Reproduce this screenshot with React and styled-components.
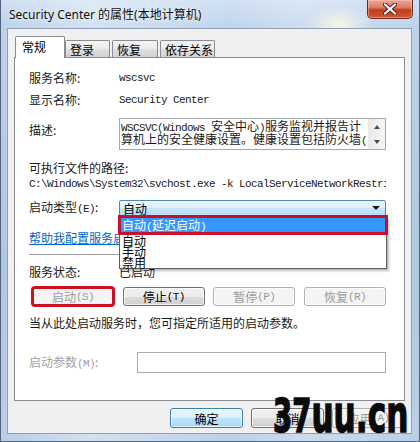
import React from 'react';
import styled, { createGlobalStyle } from 'styled-components';

const CJK = `"Noto Sans CJK SC", "Noto Sans", sans-serif`;
const MONO = `"Liberation Mono", "DejaVu Sans Mono", monospace`;

const Global = createGlobalStyle`
  html, body { margin: 0; padding: 0; }
  body {
    width: 420px; height: 442px; overflow: hidden;
    background: #b8cde6;
    font-family: ${CJK};
  }
`;

const Window = styled.div`
  position: relative;
  box-sizing: border-box;
  width: 420px;
  height: 442px;
  display: flex;
  flex-direction: column;
  padding: 0 8px 8px 7px;
  border-left: 1px solid #51647b;
  border-right: 1px solid #51647b;
  border-bottom: 1px solid #51647b;
  overflow: hidden;
  background:
    radial-gradient(ellipse 34px 18px at 338px 24px, rgba(255, 251, 225, 0.85), rgba(255, 251, 225, 0)),
    linear-gradient(90deg, rgba(255,255,255,0) 0, rgba(255,255,255,0.35) 90px, rgba(255,255,255,0.05) 230px, rgba(255,255,255,0.25) 300px, rgba(255,255,255,0) 420px),
    linear-gradient(#cfe0f2, #bcd2ea 28px, #aec7e3 60%, #b9cfe8);
`;

const TitleBar = styled.div`
  flex: none;
  height: 29px;
  display: flex;
  justify-content: space-between;
  align-items: flex-start;
`;

const Title = styled.div`
  margin-top: 7px;
  padding-left: 1px;
  font-family: "Noto Sans", "Noto Sans CJK SC", sans-serif;
  font-size: 12px;
  line-height: 16px;
  color: #111;
  text-shadow: 0 0 5px rgba(255, 255, 255, 0.95);
`;

const CloseButton = styled.div`
  box-sizing: border-box;
  width: 46px;
  height: 19px;
  margin-right: -2px;
  border: 1px solid #6a2a20;
  border-top: none;
  border-radius: 0 0 5px 5px;
  background: linear-gradient(#eaa898 0%, #dc7b64 42%, #c43d1d 55%, #d15634 100%);
  box-shadow: inset 0 0 0 1px rgba(255, 205, 195, 0.45);
  display: flex;
  align-items: center;
  justify-content: center;
`;

const Client = styled.div`
  flex: 1;
  min-height: 0;
  display: flex;
  flex-direction: column;
  background: #f0f0f0;
  padding: 7px 6px 0 6px;
  box-shadow: 0 0 0 1px #8ea1b8;
`;

const TabStrip = styled.div`
  flex: none;
  height: 21px;
  display: flex;
  align-items: flex-end;
  padding-left: 1px;
  position: relative;
  z-index: 2;
`;

const Tab = styled.div`
  box-sizing: border-box;
  width: ${p => p.$w}px;
  margin-left: ${p => p.$gap}px;
  height: ${p => (p.$active ? 22 : 17)}px;
  margin-bottom: ${p => (p.$active ? -1 : 0)}px;
  padding-left: ${p => (p.$active ? 6 : 4)}px;
  border: 1px solid #898c95;
  border-bottom: none;
  border-radius: 2px 2px 0 0;
  background: ${p =>
    p.$active ? '#ffffff' : 'linear-gradient(#f4f4f4, #ececec 45%, #dedede 55%, #d2d2d2)'};
  font-family: ${CJK};
  font-size: 12px;
  line-height: ${p => (p.$active ? 20 : 18)}px;
  color: #000;
  white-space: nowrap;
`;

const Panel = styled.div`
  flex: 1;
  min-height: 0;
  display: flex;
  flex-direction: column;
  position: relative;
  background: #fff;
  border: 1px solid #898c95;
  padding: 0 18px 0 14px;
`;

const Row = styled.div`
  display: grid;
  grid-template-columns: ${p => p.$cols || '90px 1fr'};
  align-items: ${p => p.$align || 'center'};
  margin-top: ${p => p.$mt || 0}px;
  height: ${p => p.$h}px;
`;

const Label = styled.div`
  font-family: ${CJK};
  font-size: 12px;
  line-height: 16px;
  padding-top: ${p => p.$pt || 0}px;
  color: ${p => (p.$disabled ? '#a2a2a2' : '#1a1a1a')};
  white-space: nowrap;
`;

const Asc = styled.span`
  font-family: ${MONO};
  font-size: 11px;
  letter-spacing: -0.6px;
`;

const Mono = styled.div`
  font-family: ${MONO};
  font-size: 11px;
  letter-spacing: -0.6px;
  line-height: 16px;
  color: #1a1a1a;
  white-space: nowrap;
  overflow: hidden;
`;

const Value = styled.div`
  font-family: ${CJK};
  font-size: 12px;
  line-height: 16px;
  color: #1a1a1a;
`;

const Line = styled.div`
  margin-top: ${p => p.$mt || 0}px;
  height: 16px;
  font-family: ${CJK};
  font-size: 12px;
  line-height: 16px;
  color: #1a1a1a;
  white-space: nowrap;
`;

const PathLine = styled(Mono)`
  height: 16px;
`;

const TextBox = styled.div`
  box-sizing: border-box;
  height: 32px;
  border: 1px solid #a5a8ae;
  display: flex;
  background: #fff;
`;

const TextLines = styled.div`
  flex: 1;
  min-width: 0;
  padding-left: 1px;
  overflow: hidden;
`;

const TextLine = styled.div`
  font-family: ${CJK};
  font-size: 12px;
  line-height: 14px;
  height: 14px;
  margin-bottom: -1px;
  color: #1a1a1a;
  white-space: nowrap;
  overflow: hidden;
`;

const ScrollBar = styled.div`
  width: 17px;
  display: flex;
  flex-direction: column;
  background: linear-gradient(90deg, #e9e9e9, #f6f6f6);
`;

const ScrollButton = styled.div`
  flex: 1;
  display: flex;
  align-items: center;
  justify-content: center;
`;

const Arrow = styled.div`
  width: 0;
  height: 0;
  border-left: 3.5px solid transparent;
  border-right: 3.5px solid transparent;
  ${p => (p.$dir === 'up' ? 'border-bottom: 4px solid #4d4d4d;' : 'border-top: 4px solid #4d4d4d;')}
`;

const SelectWrap = styled.div`
  position: relative;
  height: 17px;
`;

const Select = styled.div`
  box-sizing: border-box;
  height: 17px;
  border: 1px solid #4f88ba;
  border-radius: 2px;
  background: linear-gradient(#eef7fd, #dceefb 50%, #c7e4f8 50%, #b6daf3);
  display: flex;
  align-items: center;
  justify-content: space-between;
  padding: 0 5px 0 3px;
  font-family: ${CJK};
  font-size: 12px;
  line-height: 15px;
  color: #000;
`;

const SelectArrow = styled.div`
  width: 0;
  height: 0;
  border-left: 4px solid transparent;
  border-right: 4px solid transparent;
  border-top: 4px solid #1a1a1a;
`;

const Dropdown = styled.div`
  position: absolute;
  top: 100%;
  left: 0;
  right: -1px;
  z-index: 10;
  background: #fff;
  border: 1px solid #5f5f5f;
  box-shadow: 2px 2px 2px rgba(0, 0, 0, 0.28);
`;

const Option = styled.div`
  box-sizing: border-box;
  font-family: ${CJK};
  font-size: 12px;
  color: ${p => (p.$selected ? '#fff' : '#000')};
  white-space: nowrap;
  ${p =>
    p.$selected
      ? `
    height: 20px;
    margin: -3px -2px 0 -2px;
    border: 3px solid #c8102a;
    background: #3399ff;
    padding-left: 1px;
    line-height: 14px;
  `
      : `
    height: 11px;
    line-height: 11px;
    padding-left: 2px;
  `}
`;

const Link = styled.div`
  margin-top: ${p => p.$mt}px;
  height: 16px;
  font-family: ${CJK};
  font-size: 12px;
  line-height: 16px;
  color: #0066cc;
  text-decoration: underline;
  white-space: nowrap;
`;

const Separator = styled.div`
  margin-top: 8px;
  height: 1px;
  background: #a0a0a0;
`;

const ButtonRow = styled.div`
  margin-top: 7px;
  padding-left: 3px;
  display: flex;
  justify-content: space-between;
`;

const Button = styled.div`
  box-sizing: border-box;
  width: ${p => p.$w || 82}px;
  height: ${p => p.$h || 19}px;
  border: 1px solid ${p => (p.$disabled ? '#adb2b5' : p.$default ? '#3c7fb1' : '#707070')};
  border-radius: 3px;
  background: ${p =>
    p.$disabled
      ? '#f4f4f4'
      : p.$default
      ? 'linear-gradient(#eaf6fd, #d9f0fc 50%, #bee6fd 50%, #a7d9f5)'
      : 'linear-gradient(#f2f2f2, #ebebeb 50%, #dddddd 50%, #cfcfcf)'};
  box-shadow: inset 0 0 0 1px rgba(255, 255, 255, 0.7);
  color: ${p => (p.$disabled ? '#9a9a9a' : '#000')};
  font-family: ${CJK};
  font-size: 12px;
  display: flex;
  align-items: center;
  justify-content: center;
  white-space: nowrap;
  outline: ${p => (p.$marked ? '3px solid #cc1020' : 'none')};
  outline-offset: -2px;
`;

const Input = styled.div`
  box-sizing: border-box;
  height: 21px;
  border: 1px solid #abadb3;
  background: #fff;
`;

const Footer = styled.div`
  flex: none;
  height: 32px;
  box-sizing: border-box;
  padding-top: 7px;
  display: flex;
  justify-content: flex-end;
  gap: 8px;
`;

const Watermark = styled.div`
  position: absolute;
  left: 272px;
  top: 391px;
  display: flex;
  align-items: baseline;
  transform: scaleX(0.6);
  transform-origin: left top;
  font-family: "DejaVu Sans", sans-serif;
  font-weight: 900;
  color: #0a0a0a;
  -webkit-text-stroke: 1.5px #0a0a0a;
  white-space: nowrap;
  pointer-events: none;
`;

const WaterPart = styled.span`
  font-size: ${p => p.$size}px;
  line-height: 46px;
`;

const tabs = [
  { label: '常规', w: 50, gap: 0, active: true },
  { label: '登录', w: 45, gap: 0 },
  { label: '恢复', w: 46, gap: 2 },
  { label: '依存关系', w: 55, gap: 2 },
];

export default function App() {
  return (
    <>
      <Global />
      <Window>
        <TitleBar>
          <Title>Security Center 的属性(本地计算机)</Title>
          <CloseButton>
            <svg width="14" height="12" viewBox="0 0 14 12">
              <path d="M2 1.5 L12 10.5 M12 1.5 L2 10.5" stroke="#5a1c14" strokeWidth="4.2" strokeLinecap="round" />
              <path d="M2 1.5 L12 10.5 M12 1.5 L2 10.5" stroke="#ffffff" strokeWidth="2.3" strokeLinecap="round" />
            </svg>
          </CloseButton>
        </TitleBar>
        <Client>
          <TabStrip>
            {tabs.map(t => (
              <Tab key={t.label} $w={t.w} $gap={t.gap} $active={t.active}>
                {t.label}
              </Tab>
            ))}
          </TabStrip>
          <Panel>
            <Row $mt={12} $h={16}>
              <Label>服务名称:</Label>
              <Mono>wscsvc</Mono>
            </Row>
            <Row $mt={6} $h={16}>
              <Label>显示名称:</Label>
              <Mono>Security Center</Mono>
            </Row>
            <Row $mt={10} $h={32} $align="start">
              <Label $pt={4}>描述:</Label>
              <TextBox>
                <TextLines>
                  <TextLine>
                    <Asc>WSCSVC(Windows </Asc>安全中心<Asc>)</Asc>服务监视并报告计
                  </TextLine>
                  <TextLine>
                    算机上的安全健康设置。健康设置包括防火墙<Asc>(</Asc>
                  </TextLine>
                </TextLines>
                <ScrollBar>
                  <ScrollButton>
                    <Arrow $dir="up" />
                  </ScrollButton>
                  <ScrollButton>
                    <Arrow $dir="down" />
                  </ScrollButton>
                </ScrollBar>
              </TextBox>
            </Row>
            <Line $mt={10}>可执行文件的路径:</Line>
            <PathLine>{'C:\\Windows\\System32\\svchost.exe -k LocalServiceNetworkRestricted'}</PathLine>
            <Row $mt={7} $h={17}>
              <Label>
                启动类型<Asc>(E)</Asc>:
              </Label>
              <SelectWrap>
                <Select>
                  <span>自动</span>
                  <SelectArrow />
                </Select>
                <Dropdown>
                  <Option $selected>
                    自动<Asc>(</Asc>延迟启动<Asc>)</Asc>
                  </Option>
                  <Option>自动</Option>
                  <Option>手动</Option>
                  <Option>禁用</Option>
                </Dropdown>
              </SelectWrap>
            </Row>
            <Link $mt={14}>帮助我配置服务启动选项。</Link>
            <Separator />
            <Row $mt={9} $h={16}>
              <Label>服务状态:</Label>
              <Value>已启动</Value>
            </Row>
            <ButtonRow>
              <Button $disabled $marked>
                启动<Asc>(S)</Asc>
              </Button>
              <Button>
                停止<Asc>(T)</Asc>
              </Button>
              <Button $disabled>
                暂停<Asc>(P)</Asc>
              </Button>
              <Button $disabled>
                恢复<Asc>(R)</Asc>
              </Button>
            </ButtonRow>
            <Line $mt={9}>当从此处启动服务时，您可指定所适用的启动参数。</Line>
            <Row $mt={21} $h={21} $cols="108px 1fr">
              <Label $disabled>
                启动参数<Asc>(M)</Asc>:
              </Label>
              <Input />
            </Row>
          </Panel>
          <Footer>
            <Button $default $w={73} $h={20}>确定</Button>
            <Button $w={73} $h={20}>取消</Button>
            <Button $disabled $w={73} $h={20}>
              应用<Asc>(A)</Asc>
            </Button>
          </Footer>
        </Client>
        <Watermark>
          <WaterPart $size={46}>37</WaterPart>
          <WaterPart $size={52}>uu.cn</WaterPart>
        </Watermark>
      </Window>
    </>
  );
}
